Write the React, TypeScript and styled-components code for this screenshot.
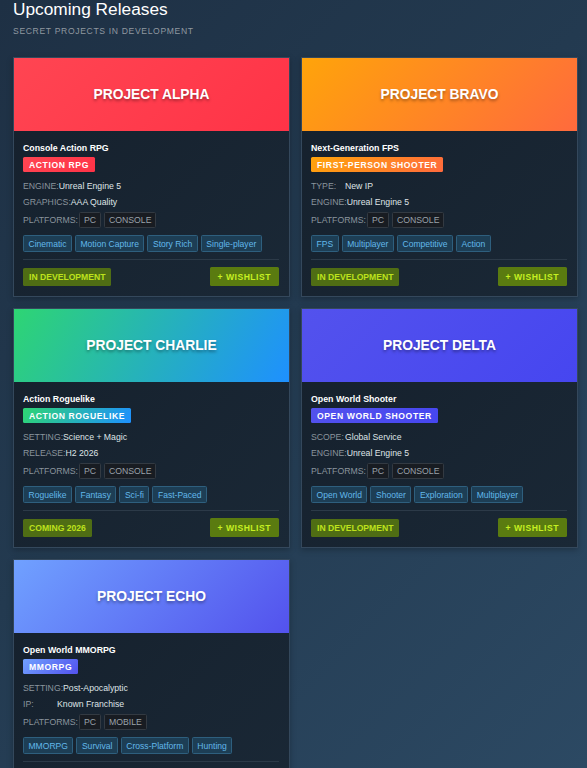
import { FC } from 'react';
import styled, { createGlobalStyle } from 'styled-components';

const GlobalStyle = createGlobalStyle`
  html, body {
    margin: 0;
    padding: 0;
  }

  body {
    min-height: 100vh;
    background: linear-gradient(135deg, #1e3044 0%, #233a50 45%, #2c4963 100%);
    background-attachment: fixed;
    font-family: 'Liberation Sans', Arial, sans-serif;
    color: #dfe3e6;
  }
`;

const Page = styled.div`
  display: flex;
  flex-flow: column nowrap;
  padding: 0 9px 24px 13px;
`;

const Title = styled.h1`
  all: unset;
  display: block;
  font-weight: 400;
  font-size: 17.3px;
  line-height: 18px;
  color: #ffffff;
`;

const Subtitle = styled.p`
  all: unset;
  display: block;
  margin-top: 8px;
  font-size: 8.6px;
  line-height: 10px;
  letter-spacing: 0.65px;
  text-transform: uppercase;
  color: #8f98a0;
`;

const Grid = styled.div`
  display: grid;
  grid-template-columns: repeat(2, 1fr);
  gap: 11px;
  margin-top: 21px;
`;

const Card = styled.div`
  display: flex;
  flex-flow: column nowrap;
  border: 1px solid #34485c;
  background: linear-gradient(135deg, #15202c 0%, #1a2836 100%);
  box-shadow: 0 2px 6px rgba(0, 0, 0, 0.25);
`;

const Banner = styled.div<{ $bg: string }>`
  display: flex;
  align-items: center;
  justify-content: center;
  height: 73px;
  background: ${(p) => p.$bg};
`;

const BannerTitle = styled.h2`
  all: unset;
  font-weight: 700;
  font-size: 13.8px;
  color: #ffffff;
  text-shadow: 0 1.5px 3px rgba(0, 0, 0, 0.35);
`;

const Body = styled.div`
  display: flex;
  flex-flow: column nowrap;
  align-items: flex-start;
  padding: 11px 10px 10px 9px;
`;

const Kind = styled.p`
  all: unset;
  font-weight: 700;
  font-size: 8.8px;
  line-height: 12px;
  color: #ffffff;
`;

const Genre = styled.span<{ $bg: string }>`
  display: inline-flex;
  align-items: center;
  height: 15px;
  margin-top: 3px;
  margin-bottom: 8px;
  padding: 0 6px;
  border-radius: 1.5px;
  background: ${(p) => p.$bg};
  font-weight: 700;
  font-size: 8.6px;
  letter-spacing: 0.6px;
  text-transform: uppercase;
  color: #ffffff;
`;

const InfoRow = styled.div`
  display: flex;
  align-items: center;
  min-height: 12px;
  margin-bottom: 4px;
  font-size: 8.7px;
  line-height: 12px;
`;

const Label = styled.span`
  min-width: 34px;
  color: #8a949d;
  text-transform: uppercase;
`;

const Value = styled.span`
  color: #dfe3e6;
`;

const Chips = styled.div`
  display: flex;
  gap: 3px;
  margin-left: 1px;
`;

const Chip = styled.span`
  display: inline-flex;
  align-items: center;
  height: 16px;
  padding: 0 4px;
  border: 1px solid #333a42;
  border-radius: 1.5px;
  background: #181c22;
  box-sizing: border-box;
  font-size: 8.7px;
  color: #9aa2aa;
`;

const Tags = styled.div`
  display: flex;
  flex-flow: row wrap;
  gap: 3px;
  margin-top: 3px;
`;

const Tag = styled.span`
  display: inline-flex;
  align-items: center;
  height: 17px;
  padding: 0 4.5px;
  border: 1px solid #2e5f7e;
  border-radius: 1.5px;
  background: #1d3e55;
  box-sizing: border-box;
  font-size: 8.55px;
  color: #62b8ea;
`;

const Divider = styled.hr`
  all: unset;
  display: block;
  align-self: stretch;
  height: 1px;
  margin-top: 7px;
  background: #2c3a48;
`;

const Footer = styled.div`
  display: flex;
  align-self: stretch;
  align-items: center;
  justify-content: space-between;
  margin-top: 7px;
`;

const Status = styled.span`
  display: inline-flex;
  align-items: center;
  height: 18px;
  padding: 0 6px;
  border-radius: 1.5px;
  background: #4f6d14;
  font-weight: 700;
  font-size: 8.6px;
  color: #bde21c;
`;

const Wishlist = styled.button`
  all: unset;
  display: inline-flex;
  align-items: center;
  height: 19px;
  padding: 0 8px;
  border-radius: 1.5px;
  background: #5a7b10;
  font-family: 'Liberation Sans', Arial, sans-serif;
  font-weight: 700;
  font-size: 8.6px;
  letter-spacing: 0.5px;
  color: #c6f022;
  cursor: pointer;
`;

interface Project {
  name: string;
  kind: string;
  genre: string;
  bg: string;
  info: [string, string][];
  platforms: string[];
  tags: string[];
  status: string;
}

const projects: Project[] = [
  {
    name: 'PROJECT ALPHA',
    kind: 'Console Action RPG',
    genre: 'Action RPG',
    bg: 'linear-gradient(135deg, #ff4552 0%, #ff3347 100%)',
    info: [
      ['Engine:', 'Unreal Engine 5'],
      ['Graphics:', 'AAA Quality'],
    ],
    platforms: ['PC', 'CONSOLE'],
    tags: ['Cinematic', 'Motion Capture', 'Story Rich', 'Single-player'],
    status: 'IN DEVELOPMENT',
  },
  {
    name: 'PROJECT BRAVO',
    kind: 'Next-Generation FPS',
    genre: 'First-Person Shooter',
    bg: 'linear-gradient(135deg, #ffa40a 0%, #ff6a3d 100%)',
    info: [
      ['Type:', 'New IP'],
      ['Engine:', 'Unreal Engine 5'],
    ],
    platforms: ['PC', 'CONSOLE'],
    tags: ['FPS', 'Multiplayer', 'Competitive', 'Action'],
    status: 'IN DEVELOPMENT',
  },
  {
    name: 'PROJECT CHARLIE',
    kind: 'Action Roguelike',
    genre: 'Action Roguelike',
    bg: 'linear-gradient(120deg, #2ed573 0%, #1e90ff 100%)',
    info: [
      ['Setting:', 'Science + Magic'],
      ['Release:', 'H2 2026'],
    ],
    platforms: ['PC', 'CONSOLE'],
    tags: ['Roguelike', 'Fantasy', 'Sci-fi', 'Fast-Paced'],
    status: 'COMING 2026',
  },
  {
    name: 'PROJECT DELTA',
    kind: 'Open World Shooter',
    genre: 'Open World Shooter',
    bg: 'linear-gradient(135deg, #5352ed 0%, #4646f0 100%)',
    info: [
      ['Scope:', 'Global Service'],
      ['Engine:', 'Unreal Engine 5'],
    ],
    platforms: ['PC', 'CONSOLE'],
    tags: ['Open World', 'Shooter', 'Exploration', 'Multiplayer'],
    status: 'IN DEVELOPMENT',
  },
  {
    name: 'PROJECT ECHO',
    kind: 'Open World MMORPG',
    genre: 'MMORPG',
    bg: 'linear-gradient(135deg, #70a1ff 0%, #5352ed 100%)',
    info: [
      ['Setting:', 'Post-Apocalyptic'],
      ['IP:', 'Known Franchise'],
    ],
    platforms: ['PC', 'MOBILE'],
    tags: ['MMORPG', 'Survival', 'Cross-Platform', 'Hunting'],
    status: 'IN DEVELOPMENT',
  },
];

const ProjectCard: FC<{ project: Project }> = ({ project }) => (
  <Card>
    <Banner $bg={project.bg}>
      <BannerTitle>{project.name}</BannerTitle>
    </Banner>
    <Body>
      <Kind>{project.kind}</Kind>
      <Genre $bg={project.bg}>{project.genre}</Genre>
      {project.info.map(([label, value]) => (
        <InfoRow key={label}>
          <Label>{label}</Label>
          <Value>{value}</Value>
        </InfoRow>
      ))}
      <InfoRow>
        <Label>Platforms:</Label>
        <Chips>
          {project.platforms.map((p) => (
            <Chip key={p}>{p}</Chip>
          ))}
        </Chips>
      </InfoRow>
      <Tags>
        {project.tags.map((t) => (
          <Tag key={t}>{t}</Tag>
        ))}
      </Tags>
      <Divider />
      <Footer>
        <Status>{project.status}</Status>
        <Wishlist>+ WISHLIST</Wishlist>
      </Footer>
    </Body>
  </Card>
);

const App: FC = () => (
  <>
    <GlobalStyle />
    <Page>
      <Title>Upcoming Releases</Title>
      <Subtitle>Secret Projects in Development</Subtitle>
      <Grid>
        {projects.map((p) => (
          <ProjectCard key={p.name} project={p} />
        ))}
      </Grid>
    </Page>
  </>
);

export default App;
